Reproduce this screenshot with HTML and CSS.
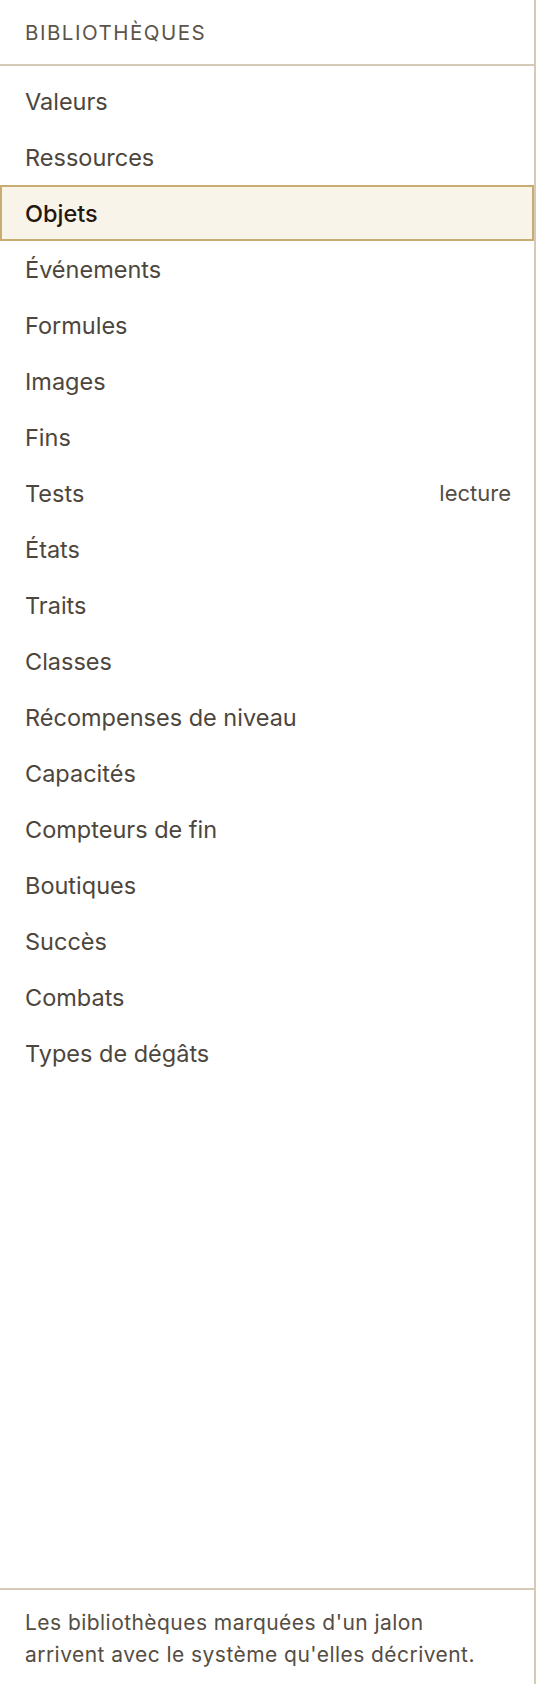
FILE: index.html
```html
<!DOCTYPE html>
<html lang="fr">
<head>
<meta charset="utf-8">
<title>Bibliothèques</title>
<link rel="stylesheet" href="styles.css">
</head>
<body>
<aside class="sidebar">
  <header class="sidebar-head">
    <h2 class="sidebar-title">BIBLIOTHÈQUES</h2>
  </header>
  <nav class="lib-list">
    <a class="lib-item">Valeurs</a>
    <a class="lib-item">Ressources</a>
    <a class="lib-item is-active">Objets</a>
    <a class="lib-item">Événements</a>
    <a class="lib-item">Formules</a>
    <a class="lib-item">Images</a>
    <a class="lib-item">Fins</a>
    <a class="lib-item"><span>Tests</span><span class="lib-tag">lecture</span></a>
    <a class="lib-item">États</a>
    <a class="lib-item">Traits</a>
    <a class="lib-item">Classes</a>
    <a class="lib-item">Récompenses de niveau</a>
    <a class="lib-item">Capacités</a>
    <a class="lib-item">Compteurs de fin</a>
    <a class="lib-item">Boutiques</a>
    <a class="lib-item">Succès</a>
    <a class="lib-item">Combats</a>
    <a class="lib-item">Types de dégâts</a>
  </nav>
  <footer class="sidebar-foot">
    <p>Les bibliothèques marquées d'un jalon arrivent avec le système qu'elles décrivent.</p>
  </footer>
</aside>
</body>
</html>
```
FILE: styles.css
```css
* { box-sizing: border-box; }
html, body { margin: 0; padding: 0; background: #ffffff; }
body {
  font-family: Inter, "Noto Sans", "Liberation Sans", sans-serif;
  color: #4d463d;
}
.sidebar {
  width: 536px;
  height: 1684px;
  display: flex;
  flex-direction: column;
  border-right: 2px solid #d5cab5;
  background: #ffffff;
}
.sidebar-head {
  height: 66px;
  border-bottom: 2px solid #d5cab5;
  padding: 3px 25px 0;
  display: flex;
  align-items: center;
}
.sidebar-title {
  margin: 0;
  font-size: 20.5px;
  font-weight: 400;
  letter-spacing: 1.5px;
  color: #5c544a;
  line-height: 1;
}
.lib-list {
  flex: 1;
  display: flex;
  flex-direction: column;
  padding-top: 7px;
}
.lib-item {
  height: 56px;
  display: flex;
  align-items: center;
  justify-content: space-between;
  padding: 0 21px 0 23px;
  border: 2px solid transparent;
  font-size: 23.5px;
  color: #4d463d;
  text-decoration: none;
}
.lib-item.is-active {
  background: #f8f4ea;
  border-color: #c9ad70;
  color: #24170e;
  font-weight: 550;
}
.lib-tag {
  font-size: 22px;
  color: #554d43;
}
.sidebar-foot {
  border-top: 2px solid #d5cab5;
  padding: 17px 25px 13px;
}
.sidebar-foot p {
  margin: 0;
  max-width: 470px;
  font-size: 21px;
  line-height: 32px;
  letter-spacing: 0.45px;
  color: #554d43;
}
```
